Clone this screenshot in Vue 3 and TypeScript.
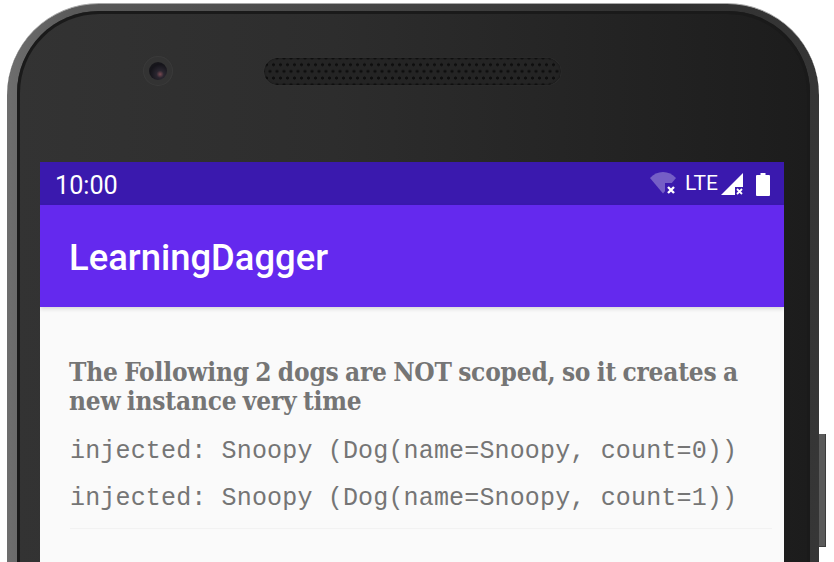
<script setup lang="ts">
const lines: string[] = [
  'injected: Snoopy (Dog(name=Snoopy, count=0))',
  'injected: Snoopy (Dog(name=Snoopy, count=1))',
]
</script>

<template>
  <div class="page">
    <div class="shell">
      <span class="side-button"></span>
      <div class="bezel">
        <div class="top">
          <div class="camera"><span class="lens"></span></div>
          <div class="speaker"></div>
        </div>
        <div class="screen">
          <div class="status">
            <span class="clock">10:00</span>
            <div class="status-icons">
              <svg class="wifi" width="28" height="24" viewBox="0 0 28 24">
                <path d="M1 6C4.500 2 9 0 14 0s9.500 2 13 6L14 21.500z" fill="#fff" fill-opacity=".3" />
                <path d="M16 11h12v13H16z" fill="#3a19ae" />
                <path d="M19 15l6 6M25 15l-6 6" stroke="#fff" stroke-width="2.400" fill="none" />
              </svg>
              <span class="lte">LTE</span>
              <svg class="signal" width="24" height="24" viewBox="0 0 24 24">
                <path d="M1 23L23 1v22z" fill="#fff" />
                <path d="M15 15h9v9h-9z" fill="#3a19ae" />
                <path d="M17 17l5 5M22 17l-5 5" stroke="#fff" stroke-width="1.800" fill="none" />
              </svg>
              <svg class="battery" width="14" height="23" viewBox="0 0 14 23">
                <path d="M4.500 0h5v2H13a1 1 0 0 1 1 1v19a1 1 0 0 1-1 1H1a1 1 0 0 1-1-1V3a1 1 0 0 1 1-1h3.500z" fill="#fff" />
              </svg>
            </div>
          </div>
          <header class="appbar">LearningDagger</header>
          <main class="content">
            <h1 class="heading">The Following 2 dogs are NOT scoped, so it creates a new instance very time</h1>
            <p v-for="(line, i) in lines" :key="i" class="line">{{ line }}</p>
            <hr class="rule" />
          </main>
        </div>
      </div>
    </div>
  </div>
</template>

<style>
html, body { margin: 0; background: #fff; overflow: hidden; }
</style>

<style scoped>
.page {
  width: 834px;
  height: 562px;
  overflow: hidden;
  padding: 3px 0 0 7px;
  box-sizing: border-box;
}
.shell {
  position: relative;
  width: 812px;
  height: 620px;
  box-sizing: border-box;
  padding: 7px 9px 0 10px;
  border-radius: 92px 92px 0 0;
  background: linear-gradient(90deg, #6e6e6e 0, #5a5a5a 8%, #484848 40%, #303030 80%, #363636 100%);
  border-top: 1px solid #a8a8a8;
}
.side-button {
  position: absolute;
  left: 812px;
  top: 430px;
  width: 6px;
  height: 112px;
  background: #5a5a5a;
  border: solid #3c3c3c;
  border-width: 0 1px 1px 0;
}
.bezel {
  height: 100%;
  box-sizing: border-box;
  padding: 0 20px 0 23px;
  border-radius: 82px 82px 0 0;
  background: linear-gradient(90deg, #333 0, #2d2d2d 40%, #1f1f1f 90%, #1c1c1c 100%);
  box-shadow: inset 0 0 0 3px #1a1a1a;
}
.top {
  height: 151px;
  box-sizing: border-box;
  display: flex;
  align-items: flex-start;
  padding: 47px 0 0 103px;
}
.camera {
  width: 30px;
  height: 30px;
  margin-top: -2px;
  border-radius: 50%;
  background: #333;
  box-shadow: inset 0 0 0 1px #3a3a3a;
  display: flex;
  align-items: center;
  justify-content: center;
}
.lens {
  width: 18px;
  height: 18px;
  border-radius: 50%;
  background: radial-gradient(circle at 62% 68%, #7a4a52 0, #2a2630 22%, #15141a 60%, #1c1c1e 100%);
}
.speaker {
  margin-left: 91px;
  width: 297px;
  height: 27px;
  border-radius: 14px;
  background-color: #242424;
  background-image:
    radial-gradient(circle, #0e0e0e 1.200px, transparent 1.800px),
    radial-gradient(circle, #0e0e0e 1.200px, transparent 1.800px);
  background-size: 7px 13.400px;
  background-position: 6px 0, 9.500px 6.700px;
  box-shadow: inset 0 0 2px #111, 0 0 1px #444;
}
.screen {
  width: 744px;
  height: 420px;
  overflow: hidden;
  background: #fafafa;
}
.status {
  height: 43px;
  background: #3a19ae;
  color: #fff;
  display: flex;
  align-items: center;
  justify-content: space-between;
  padding: 0 14px 0 15px;
}
.clock {
  font: 400 25.200px/43px Roboto, sans-serif;
  margin-top: 3px;
}
.status-icons {
  display: flex;
  align-items: center;
  margin-top: 1px;
}
.wifi { margin-top: -1px; }
.lte {
  font: 400 21px/24px Roboto, sans-serif;
  margin: -2px 0 0 8px;
}
.signal { margin: 0 0 0 2px; }
.battery { margin-left: 12px; }
.appbar {
  position: relative;
  height: 102px;
  box-sizing: border-box;
  padding-left: 29px;
  background: #6429ee;
  color: #fff;
  font: 500 36.400px/106px Roboto, sans-serif;
  box-shadow: 0 2px 4px rgba(0, 0, 0, .14);
}
.content {
  padding: 51px 12px 0 30px;
}
.heading {
  margin: 0 0 0 -1px;
  font-family: "DejaVu Serif", "Liberation Serif", serif;
  font-stretch: condensed;
  font-weight: 700;
  font-size: 26px;
  line-height: 29px;
  word-spacing: -1.500px;
  letter-spacing: -.2px;
  color: #757575;
}
.line {
  margin: 0;
  font-family: "Liberation Mono", monospace;
  font-size: 25px;
  line-height: 47px;
  letter-spacing: .16px;
  color: #757575;
  white-space: nowrap;
}
.heading + .line { margin-top: 12px; }
.rule {
  margin: 6px 0 0;
  height: 1px;
  border: 0;
  background: #f2f2f2;
}
</style>
